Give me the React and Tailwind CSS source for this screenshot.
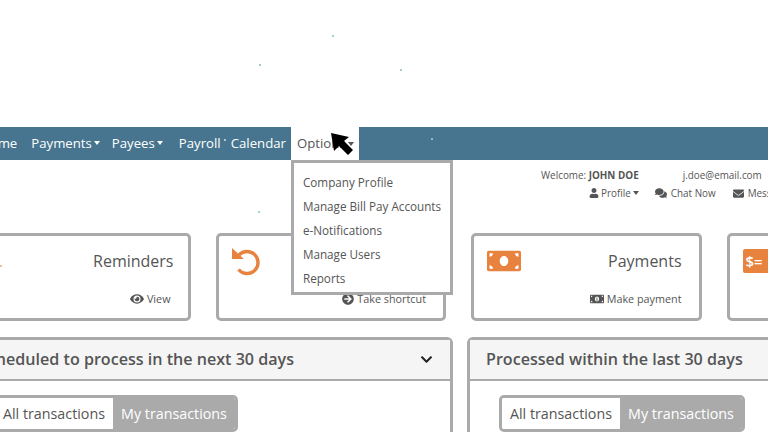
import React from "react";
import {
  FaArrowCircleRight,
  FaChevronDown,
  FaComments,
  FaEnvelope,
  FaEye,
  FaMoneyBill,
  FaMoneyBillAlt,
  FaUser,
} from "react-icons/fa";

const optionLinks = [
  "Company Profile",
  "Manage Bill Pay Accounts",
  "e-Notifications",
  "Manage Users",
  "Reports",
];

const dots = [
  { left: 332, top: 35, color: "bg-[#7fc4cf]" },
  { left: 259, top: 64, color: "bg-[#8fb8c8]" },
  { left: 400, top: 69, color: "bg-[#8fb8c8]" },
  { left: 224, top: 139, color: "bg-[#cfe3ea]" },
  { left: 431, top: 138, color: "bg-[#9fd0dd]" },
  { left: 333, top: 239, color: "bg-[#b7cfd8]" },
  { left: 258, top: 211, color: "bg-[#8fc0cf]" },
  { left: 0, top: 265, color: "bg-[#e8a878]" },
];

const Caret = () => (
  <span className="ml-[2px] inline-block border-x-[3.5px] border-t-[4px] border-x-transparent border-t-current align-middle" />
);

const NavItem = ({ label, caret, className }) => (
  <a className={`flex items-center text-white font-medium ${className}`}>
    {label}
    {caret && <Caret />}
  </a>
);

const UndoIcon = () => (
  <svg width="28" height="28" viewBox="0 0 28 28" className="mt-[1px]">
    <path d="M0 0 L0 11 L12 11 Z" fill="#e8833f" />
    <path
      d="M7 7 A11 11 0 1 1 6.5 21.5"
      fill="none"
      stroke="#e8833f"
      strokeWidth="3.4"
    />
  </svg>
);

const ShortcutCard = ({ icon, title, titleClass, action, actionIcon }) => (
  <div className="flex h-[88px] w-[230.5px] shrink-0 flex-col justify-between rounded-[5px] border-[3px] border-[#aaaaaa] bg-white pb-[11px] pl-[13px] pr-[17px] pt-[9px]">
    <div className="flex h-[32px] items-center justify-between">
      <div className="flex items-center">{icon}</div>
      {title && <span className={`text-[16px] text-[#555555] ${titleClass}`}>{title}</span>}
    </div>
    {action && (
      <div className="flex items-center justify-end gap-[3px] text-[10.8px] leading-[16px] text-[#555555]">
        {actionIcon}
        <span>{action}</span>
      </div>
    )}
  </div>
);

const TransactionToggle = () => (
  <div className="flex h-[37px] w-[246px] overflow-hidden rounded-[5px] border-[3px] border-[#aaaaaa] text-[14.3px]">
    <span className="flex w-[118px] items-center justify-center bg-white text-[#555555]">
      All transactions
    </span>
    <span className="flex flex-1 items-center justify-center bg-[#aaaaaa] text-white">
      My transactions
    </span>
  </div>
);

const Panel = ({ title, width, chevron, toggleLeft }) => (
  <div
    className={`h-[140px] shrink-0 rounded-t-[6px] border-x-[3px] border-t-[3px] border-[#aaaaaa] bg-white ${width}`}
  >
    <div className="flex h-[41px] items-center justify-between border-b-[2px] border-[#aaaaaa] bg-[#f5f5f5] pl-[16px] pr-[17px]">
      <span className="text-[16.1px] font-semibold text-[#555555]">{title}</span>
      {chevron && <FaChevronDown className="text-[13px] text-[#222222]" />}
    </div>
    <div className={`pt-[14px] ${toggleLeft}`}>
      <TransactionToggle />
    </div>
  </div>
);

export default function App() {
  return (
    <div className="relative h-[432px] w-[768px] overflow-hidden bg-white font-['Open_Sans',sans-serif]">
      <div className="-ml-[40px] w-[1100px]">
        <div className="h-[127px]" />

        {/* Main nav */}
        <nav className="flex h-[33px] items-center bg-[#47758f] text-[13.2px]">
          <NavItem label="Home" className="ml-[20px]" />
          <NavItem label="Payments" caret className="ml-[14px]" />
          <NavItem label="Payees" caret className="ml-[12px]" />
          <NavItem label="Payroll" className="ml-[16px]" />
          <NavItem label="Calendar" className="ml-[10px]" />
          <div className="relative ml-[5px] flex h-[33px] w-[68px] items-center bg-white pl-[6px] font-medium text-[#555555]">
            Options
            <Caret />
            <div className="absolute left-0 top-[33px] z-10 h-[135px] w-[162px] border-[3px] border-[#aaaaaa] bg-white pl-[9px] pt-[8px] text-[11.7px] font-normal text-[#555555]">
              {optionLinks.map((link) => (
                <div key={link} className="flex h-[24px] items-center">
                  {link}
                </div>
              ))}
            </div>
          </div>
        </nav>

        {/* Account info */}
        <div className="ml-[581px] h-[73px] pt-[7px] text-[9.9px] leading-[16px] text-[#555555]">
          <div className="flex">
            <span>
              Welcome: <b className="font-bold">JOHN DOE</b>
            </span>
            <span className="ml-[44px]">j.doe@email.com</span>
          </div>
          <div className="ml-[48px] mt-[2px] flex items-center">
            <FaUser className="text-[10px]" />
            <span className="ml-[2px]">Profile</span>
            <Caret />
            <FaComments className="ml-[16px] text-[12px]" />
            <span className="ml-[4px]">Chat Now</span>
            <FaEnvelope className="ml-[17px] text-[11px]" />
            <span className="ml-[4px]">Messages</span>
          </div>
        </div>

        {/* Shortcut cards */}
        <div className="flex gap-[25px]">
          <ShortcutCard
            title="Reminders"
            titleClass="-mr-[3px]"
            action="View"
            actionIcon={<FaEye className="text-[14px]" />}
            icon={null}
          />
          <ShortcutCard
            action="Take shortcut"
            actionIcon={<FaArrowCircleRight className="text-[12px]" />}
            icon={<UndoIcon />}
          />
          <ShortcutCard
            title="Payments"
            action="Make payment"
            actionIcon={<FaMoneyBillAlt className="text-[14px]" />}
            icon={<FaMoneyBill className="text-[34px] text-[#e8833f]" />}
          />
          <ShortcutCard
            icon={
              <span className="flex h-[24px] w-[34px] items-center rounded-[2px] bg-[#e8833f] pl-[3px] text-[15px] font-semibold text-white">
                $=
              </span>
            }
          />
        </div>

        {/* Transaction panels */}
        <div className="mt-[16px] flex gap-[14px]">
          <Panel
            title="Scheduled to process in the next 30 days"
            width="w-[493px]"
            chevron
            toggleLeft="pl-[29px]"
          />
          <Panel
            title="Processed within the last 30 days"
            width="w-[493px]"
            toggleLeft="pl-[29px]"
          />
        </div>
      </div>

      {/* Stray specks in the recording */}
      {dots.map((dot) => (
        <span
          key={`${dot.left}-${dot.top}`}
          className={`absolute h-[2px] w-[2px] rounded-full ${dot.color}`}
          style={{ left: dot.left, top: dot.top }}
        />
      ))}

      {/* Mouse pointer */}
      <svg
        className="absolute left-[330px] top-[132px] z-20"
        width="24"
        height="24"
        viewBox="0 0 24 24"
      >
        <path d="M1 1 L4 19 L9 14 L18 23 L23 18 L14 9 L19 5 Z" fill="#000000" />
      </svg>
    </div>
  );
}
